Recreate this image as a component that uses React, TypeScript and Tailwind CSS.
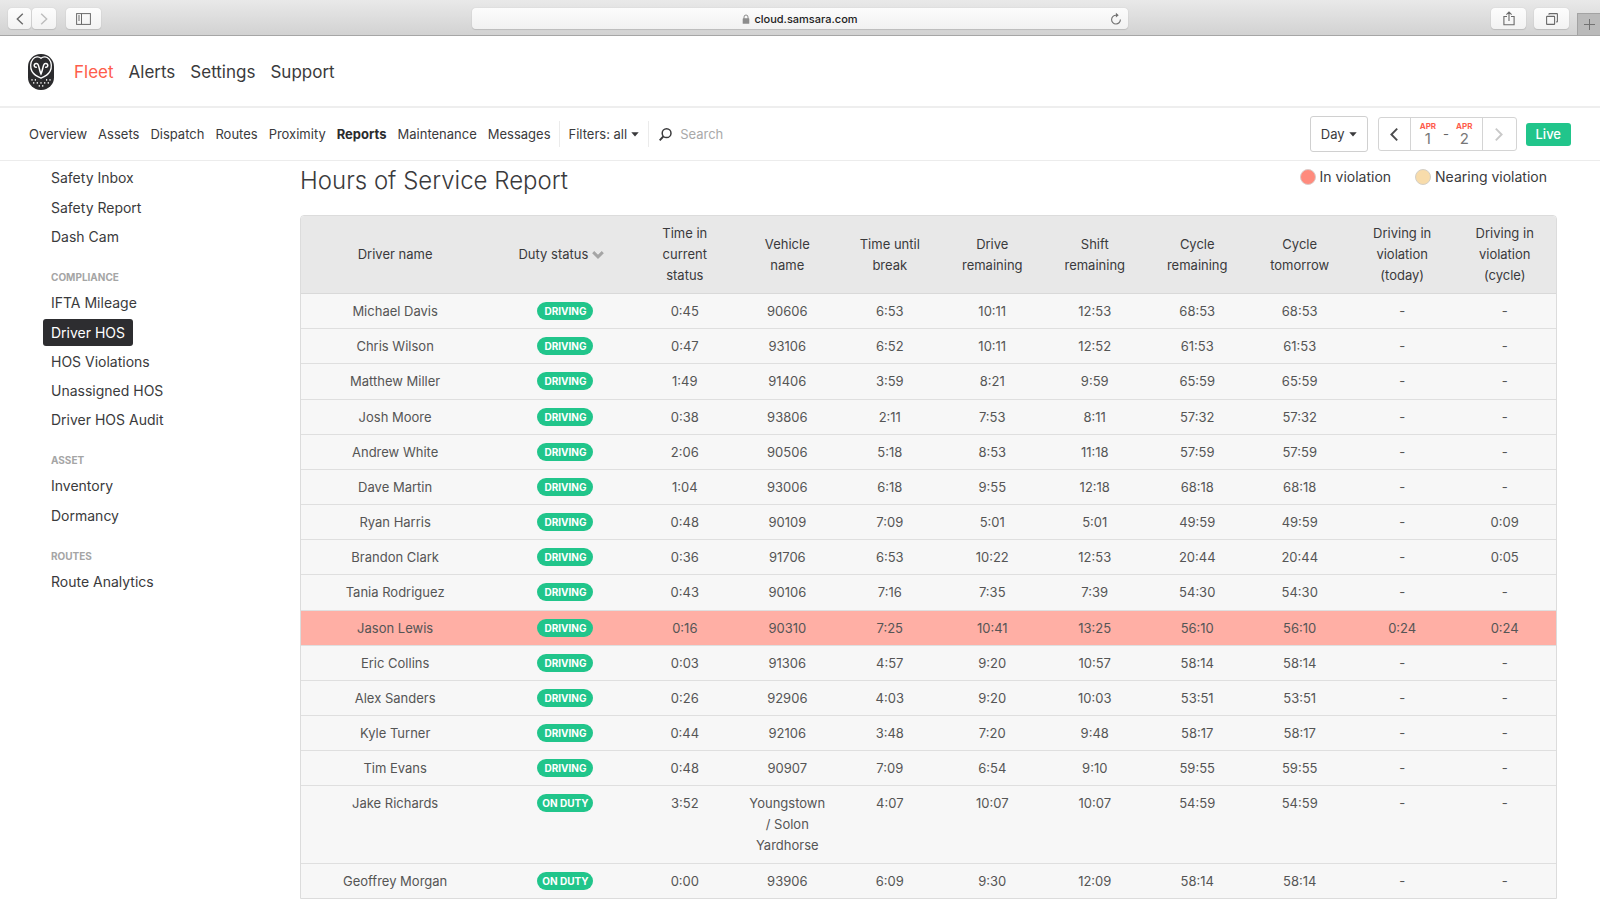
import { useState } from 'react';
import clsx from 'clsx';

type DutyStatus = 'Driving' | 'On duty';

interface Driver {
  name: string;
  status: DutyStatus;
  inStatus: string;
  vehicle: string;
  untilBreak: string;
  drive: string;
  shift: string;
  cycle: string;
  tomorrow: string;
  violationToday?: string;
  violationCycle?: string;
}

const drivers: Driver[] = [
  { name: 'Michael Davis', status: 'Driving', inStatus: '0:45', vehicle: '90606', untilBreak: '6:53', drive: '10:11', shift: '12:53', cycle: '68:53', tomorrow: '68:53' },
  { name: 'Chris Wilson', status: 'Driving', inStatus: '0:47', vehicle: '93106', untilBreak: '6:52', drive: '10:11', shift: '12:52', cycle: '61:53', tomorrow: '61:53' },
  { name: 'Matthew Miller', status: 'Driving', inStatus: '1:49', vehicle: '91406', untilBreak: '3:59', drive: '8:21', shift: '9:59', cycle: '65:59', tomorrow: '65:59' },
  { name: 'Josh Moore', status: 'Driving', inStatus: '0:38', vehicle: '93806', untilBreak: '2:11', drive: '7:53', shift: '8:11', cycle: '57:32', tomorrow: '57:32' },
  { name: 'Andrew White', status: 'Driving', inStatus: '2:06', vehicle: '90506', untilBreak: '5:18', drive: '8:53', shift: '11:18', cycle: '57:59', tomorrow: '57:59' },
  { name: 'Dave Martin', status: 'Driving', inStatus: '1:04', vehicle: '93006', untilBreak: '6:18', drive: '9:55', shift: '12:18', cycle: '68:18', tomorrow: '68:18' },
  { name: 'Ryan Harris', status: 'Driving', inStatus: '0:48', vehicle: '90109', untilBreak: '7:09', drive: '5:01', shift: '5:01', cycle: '49:59', tomorrow: '49:59', violationCycle: '0:09' },
  { name: 'Brandon Clark', status: 'Driving', inStatus: '0:36', vehicle: '91706', untilBreak: '6:53', drive: '10:22', shift: '12:53', cycle: '20:44', tomorrow: '20:44', violationCycle: '0:05' },
  { name: 'Tania Rodriguez', status: 'Driving', inStatus: '0:43', vehicle: '90106', untilBreak: '7:16', drive: '7:35', shift: '7:39', cycle: '54:30', tomorrow: '54:30' },
  { name: 'Jason Lewis', status: 'Driving', inStatus: '0:16', vehicle: '90310', untilBreak: '7:25', drive: '10:41', shift: '13:25', cycle: '56:10', tomorrow: '56:10', violationToday: '0:24', violationCycle: '0:24' },
  { name: 'Eric Collins', status: 'Driving', inStatus: '0:03', vehicle: '91306', untilBreak: '4:57', drive: '9:20', shift: '10:57', cycle: '58:14', tomorrow: '58:14' },
  { name: 'Alex Sanders', status: 'Driving', inStatus: '0:26', vehicle: '92906', untilBreak: '4:03', drive: '9:20', shift: '10:03', cycle: '53:51', tomorrow: '53:51' },
  { name: 'Kyle Turner', status: 'Driving', inStatus: '0:44', vehicle: '92106', untilBreak: '3:48', drive: '7:20', shift: '9:48', cycle: '58:17', tomorrow: '58:17' },
  { name: 'Tim Evans', status: 'Driving', inStatus: '0:48', vehicle: '90907', untilBreak: '7:09', drive: '6:54', shift: '9:10', cycle: '59:55', tomorrow: '59:55' },
  { name: 'Jake Richards', status: 'On duty', inStatus: '3:52', vehicle: 'Youngstown / Solon Yardhorse', untilBreak: '4:07', drive: '10:07', shift: '10:07', cycle: '54:59', tomorrow: '54:59' },
  { name: 'Geoffrey Morgan', status: 'On duty', inStatus: '0:00', vehicle: '93906', untilBreak: '6:09', drive: '9:30', shift: '12:09', cycle: '58:14', tomorrow: '58:14' },
];

const columns = [
  'Time in current status',
  'Vehicle name',
  'Time until break',
  'Drive remaining',
  'Shift remaining',
  'Cycle remaining',
  'Cycle tomorrow',
  'Driving in violation (today)',
  'Driving in violation (cycle)',
];

const sideSections = [
  { title: '', items: ['Safety Inbox', 'Safety Report', 'Dash Cam'] },
  { title: 'Compliance', items: ['IFTA Mileage', 'Driver HOS', 'HOS Violations', 'Unassigned HOS', 'Driver HOS Audit'] },
  { title: 'Asset', items: ['Inventory', 'Dormancy'] },
  { title: 'Routes', items: ['Route Analytics'] },
];

const mainNav = ['Fleet', 'Alerts', 'Settings', 'Support'];
const subNav = ['Overview', 'Assets', 'Dispatch', 'Routes', 'Proximity', 'Reports', 'Maintenance', 'Messages'];

const chromeButton =
  'flex h-[21px] items-center justify-center rounded-[4px] bg-linear-to-b from-[#fdfdfd] to-[#f2f2f2] shadow-[0_0_1px_#b5b5b5,0_1px_1px_#bdbdbd] text-[#6a6a6a]';

function Caret() {
  return (
    <svg viewBox="0 0 8 5" className="h-[5px] w-2" fill="currentColor">
      <path d="M0.3 0.2h7.4L4 4.4z" />
    </svg>
  );
}

function OwlLogo() {
  return (
    <svg viewBox="0 0 26 36" className="h-9 w-[26px]">
      <rect width="26" height="36" rx="12.6" fill="#2b2b2d" />
      <path
        d="M13 4.3C10.6 2.2 7.2 2.5 4.9 5.2C2.3 8.3 1.9 13.5 4 17.4C5.8 20.7 9 22.6 13 24.2C17 22.6 20.2 20.7 22 17.4C24.1 13.5 23.7 8.3 21.1 5.2C18.8 2.5 15.4 2.2 13 4.3Z"
        fill="none"
        stroke="#fff"
        strokeWidth="1.3"
      />
      <path
        d="M8.3 13.3C6.6 13.2 5.7 11.7 6.5 10.4C7.4 9 9.5 9.2 10.3 11C11.2 13.2 11.6 17 13 20C14.4 17 14.8 13.2 15.7 11C16.5 9.2 18.6 9 19.5 10.4C20.3 11.7 19.4 13.2 17.7 13.3"
        fill="none"
        stroke="#fff"
        strokeWidth="1.5"
        strokeLinecap="round"
      />
      <g stroke="#e4e4e4" strokeWidth="1.2">
        <path d="M4 25v1.8M7.4 25v1.8M18.6 25v1.8M22 25v1.8" />
        <path d="M5.7 28v1.7M9.3 28v1.7M13 28v1.7M16.7 28v1.7M20.3 28v1.7" />
        <path d="M11.3 31v1.7M14.7 31v1.7" />
      </g>
    </svg>
  );
}

function BrowserBar() {
  return (
    <div className="flex h-9 border-b border-[#a6a6a6] bg-linear-to-b from-[#e9e9e9] to-[#d2d2d2] pt-2">
      <div className="flex flex-1">
        <button type="button" aria-label="Back" className={clsx(chromeButton, 'ml-2 w-[23px]')}>
          <svg viewBox="0 0 8 12" className="h-3 w-2" fill="none" stroke="currentColor" strokeWidth="1.4">
            <path d="M6.8 0.7L1.3 6l5.5 5.3" />
          </svg>
        </button>
        <button type="button" aria-label="Forward" className={clsx(chromeButton, 'ml-px w-6')}>
          <svg viewBox="0 0 8 12" className="h-3 w-2" fill="none" stroke="#bdbdbd" strokeWidth="1.4">
            <path d="M1.2 0.7L6.7 6l-5.5 5.3" />
          </svg>
        </button>
        <button type="button" aria-label="Show sidebar" className={clsx(chromeButton, 'ml-2.5 w-[35px]')}>
          <svg viewBox="0 0 15 12" className="h-3 w-[15px]" fill="none" stroke="currentColor">
            <rect x="0.6" y="0.6" width="13.8" height="10.8" />
            <path d="M5.5 0.6v10.8M2 3h2M2 5h2M2 7h2" />
          </svg>
        </button>
      </div>
      <div className="flex h-[21px] w-[41%] items-center rounded-[4px] bg-linear-to-b from-[#fcfcfc] to-[#f1f1f1] px-1.5 shadow-[0_0_1px_#b5b5b5,0_1px_1px_#bdbdbd]">
        <div className="flex flex-1 items-center justify-center gap-1 pl-3 text-[11px] leading-4 font-medium text-[#222]">
          <svg viewBox="0 0 8 10" className="h-2.5 w-2">
            <path d="M2 5V3a2 2 0 0 1 4 0v2" fill="none" stroke="#8c8c8c" />
            <rect x="0.7" y="4.3" width="6.6" height="5.5" rx="0.6" fill="#8c8c8c" />
          </svg>
          cloud.samsara.com
        </div>
        <button type="button" aria-label="Reload" className="text-[#707070]">
          <svg viewBox="0 0 12 14" className="h-3.5 w-3" fill="none" stroke="currentColor">
            <path d="M6.2 3.2A4.4 4.4 0 1 0 10.4 7.6" strokeWidth="1.1" />
            <path d="M5.9 0.8L8.7 3.2L5.9 5.6z" fill="currentColor" stroke="none" />
          </svg>
        </button>
      </div>
      <div className="flex flex-1 justify-end">
        <button type="button" aria-label="Share" className={clsx(chromeButton, 'w-[35px]')}>
          <svg viewBox="0 0 12 15" className="h-[15px] w-3" fill="none" stroke="currentColor" strokeWidth="1.1">
            <path d="M4 5.5H0.9v8.3h10.2V5.5H8M6 10V1.2M3.4 3.7L6 1.1l2.6 2.6" />
          </svg>
        </button>
        <button type="button" aria-label="Show all tabs" className={clsx(chromeButton, 'ml-2 w-[35px]')}>
          <svg viewBox="0 0 12 12" className="h-3 w-3" fill="none" stroke="currentColor" strokeWidth="1.1">
            <rect x="0.6" y="3.4" width="8" height="8" rx="0.5" />
            <path d="M3 1.8V1.1q0-.5.5-.5h7.4q.5 0 .5.5v7.3q0 .5-.5.5h-.7" />
          </svg>
        </button>
        <button
          type="button"
          aria-label="New tab"
          className="mt-[5px] ml-2 flex h-[22px] w-[23px] items-center justify-center border-t border-l border-[#a3a3a3] bg-[#bababa] text-[#727272]"
        >
          <svg viewBox="0 0 11 11" className="h-[11px] w-[11px]" stroke="currentColor">
            <path d="M5.5 0v11M0 5.5h11" />
          </svg>
        </button>
      </div>
    </div>
  );
}

function DateCell({ month, day }: { month: string; day: number }) {
  return (
    <span className="flex flex-col items-center">
      <span className="text-[8px] leading-[10px] font-bold text-[#fe5d4c] uppercase">{month}</span>
      <span className="text-[15px] leading-4 text-[#777]">{day}</span>
    </span>
  );
}

function Toolbar() {
  return (
    <div className="flex h-[53px] items-center border-b border-[#ececec] px-[29px] text-[13px] leading-5">
      <nav className="flex gap-[11px]">
        {subNav.map((item) => (
          <a key={item} href="#" className={item === 'Reports' ? 'font-bold text-[#2b2b2d]' : undefined}>
            {item}
          </a>
        ))}
      </nav>
      <div className="ml-2 flex h-[26px] items-center border-x border-[#ebebeb] px-[9px]">
        <button type="button" className="flex items-center gap-1">
          Filters: all <Caret />
        </button>
      </div>
      <label className="flex flex-1 items-center gap-2 pl-2.5">
        <svg viewBox="0 0 13 13" className="h-[13px] w-[13px]" fill="none" stroke="#3a3a3c" strokeWidth="1.5">
          <circle cx="7.6" cy="5.2" r="4.4" />
          <path d="M4.3 8.5L0.7 12.3" strokeWidth="1.9" />
        </svg>
        <input type="text" aria-label="Search" placeholder="Search" className="w-40 outline-none placeholder:text-[#a9a9a9]" />
      </label>
      <button type="button" className="flex h-9 items-center gap-1 rounded-[3px] border border-[#d0d0d0] px-2.5">
        Day <Caret />
      </button>
      <div className="ml-2.5 flex h-[34px] rounded-[3px] border border-[#d4d4d4]">
        <button type="button" aria-label="Previous day" className="flex w-8 items-center justify-center border-r border-[#d4d4d4]">
          <svg viewBox="0 0 8 13" className="h-[13px] w-2" fill="none" stroke="#4c4c4e" strokeWidth="1.9">
            <path d="M7.2 0.7L1.4 6.5l5.8 5.8" />
          </svg>
        </button>
        <div className="flex items-center justify-center gap-[7px] px-[9px]">
          <DateCell month="Apr" day={1} />
          <span className="text-[#666]">-</span>
          <DateCell month="Apr" day={2} />
        </div>
        <button type="button" aria-label="Next day" className="flex w-[34px] items-center justify-center border-l border-[#d4d4d4]">
          <svg viewBox="0 0 8 13" className="h-[13px] w-2" fill="none" stroke="#c9c9c9" strokeWidth="1.9">
            <path d="M0.8 0.7L6.6 6.5L0.8 12.3" />
          </svg>
        </button>
      </div>
      <button type="button" className="ml-[9px] h-[23px] rounded-[3px] bg-[#21c58b] px-2.5 font-medium text-white">
        Live
      </button>
    </div>
  );
}

function Sidebar() {
  const [active, setActive] = useState('Driver HOS');

  return (
    <aside className="w-[300px] shrink-0 pt-0.5 pl-[43px]">
      {sideSections.map((section) => (
        <div key={section.title} className="mb-[18px]">
          {section.title && (
            <h2 className="px-2 text-[10px] leading-4 font-bold text-[#a5a5a5] uppercase">{section.title}</h2>
          )}
          <ul className={clsx('text-[14px]', section.title && 'mt-[3px]')}>
            {section.items.map((item) => (
              <li key={item} className="flex h-[29px] items-center first:mb-px">
                <a
                  href="#"
                  onClick={() => setActive(item)}
                  className={clsx('rounded-[3px] px-2 leading-[27px]', item === active && 'bg-[#2d2d30] text-white')}
                >
                  {item}
                </a>
              </li>
            ))}
          </ul>
        </div>
      ))}
    </aside>
  );
}

function HosTable() {
  return (
    <div className="grid flex-1 overflow-hidden rounded-t-[4px] border border-[#dcdcdc]">
      <table className="w-full table-fixed text-center text-[13px] leading-[21px]">
        <thead className="bg-[#e8e8e8]">
          <tr className="border-b border-[#d9d9d9]">
            <th className="w-[15%] font-normal">Driver name</th>
            <th className="w-[11.5%] font-normal">
              <button type="button" className="inline-flex items-center gap-1">
                Duty status
                <svg viewBox="0 0 12 8" className="h-2 w-3" fill="none" stroke="#a5a5a5" strokeWidth="3">
                  <path d="M1.2 1.2L6 5.8l4.8-4.6" />
                </svg>
              </button>
            </th>
            {columns.map((label) => (
              <th key={label} className="px-3 py-[7px] font-normal">
                {label}
              </th>
            ))}
          </tr>
        </thead>
        <tbody className="text-[#555]">
          {drivers.map((d) => (
            <tr
              key={d.name}
              className={clsx(
                'border-b border-[#dfdfdf] align-top last:border-b-0',
                d.violationToday ? 'bg-[#ffafa5]' : 'bg-[#f7f7f7]',
              )}
            >
              <td className="px-2 pt-[7px] pb-1.5">{d.name}</td>
              <td className="pt-2 pb-1 pl-2">
                <span className="inline-block h-[18px] w-14 rounded-full bg-[#21c58b] align-top text-[10px] leading-[18px] font-bold text-white uppercase">
                  {d.status}
                </span>
              </td>
              <td className="pt-[7px] pb-1.5">{d.inStatus}</td>
              <td className="px-3 pt-[7px] pb-1.5">{d.vehicle}</td>
              <td className="pt-[7px] pb-1.5">{d.untilBreak}</td>
              <td className="pt-[7px] pb-1.5">{d.drive}</td>
              <td className="pt-[7px] pb-1.5">{d.shift}</td>
              <td className="pt-[7px] pb-1.5">{d.cycle}</td>
              <td className="pt-[7px] pb-1.5">{d.tomorrow}</td>
              <td className="pt-[7px] pb-1.5">{d.violationToday ?? '-'}</td>
              <td className="pt-[7px] pb-1.5">{d.violationCycle ?? '-'}</td>
            </tr>
          ))}
        </tbody>
      </table>
    </div>
  );
}

export default function App() {
  return (
    <div className="flex min-h-screen flex-col bg-white font-[Inter,sans-serif] text-[#3a3a3c]">
      <BrowserBar />
      <header className="flex h-[72px] items-center border-b-2 border-[#eee] pt-0.5 pl-7">
        <OwlLogo />
        <nav className="ml-5 flex gap-[15px] text-[17px] leading-6">
          {mainNav.map((item) => (
            <a key={item} href="#" className={item === 'Fleet' ? 'text-[#fe5d4c]' : undefined}>
              {item}
            </a>
          ))}
        </nav>
      </header>
      <Toolbar />

      <div className="flex flex-1">
        <Sidebar />
        <main className="flex min-w-0 flex-1 flex-col pr-[43px] pb-px">
          <div className="flex h-[54px] items-start justify-between pr-2.5">
            <h1 className="pt-1 text-[24px] leading-8 font-light">Hours of Service Report</h1>
            <div className="flex gap-6 pt-1 text-[14px] leading-6">
              <span className="flex items-center gap-1">
                <span className="h-4 w-4 rounded-full border border-[#dccbc8] bg-[#ff8b7d]" />
                In violation
              </span>
              <span className="flex items-center gap-1">
                <span className="h-4 w-4 rounded-full border border-[#d3cfc7] bg-[#f8dcab]" />
                Nearing violation
              </span>
            </div>
          </div>
          <HosTable />
        </main>
      </div>
    </div>
  );
}
